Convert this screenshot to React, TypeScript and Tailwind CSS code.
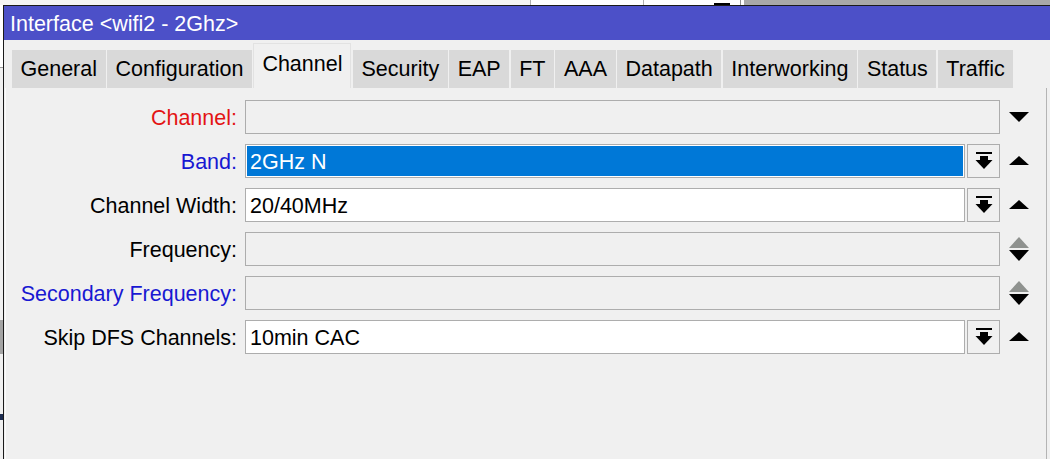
import React from "react";

const font = { fontFamily: '"Liberation Sans", Arial, sans-serif' };

const tabs = [
  "General",
  "Configuration",
  "Channel",
  "Security",
  "EAP",
  "FT",
  "AAA",
  "Datapath",
  "Interworking",
  "Status",
  "Traffic",
];

type Arrow = "down" | "up" | "both";

type Row = {
  label: string;
  color: string;
  value?: string;
  kind: "disabled" | "combo" | "selected";
  arrow: Arrow;
};

const rows: Row[] = [
  { label: "Channel:", color: "text-[#e31414]", kind: "disabled", arrow: "down" },
  { label: "Band:", color: "text-[#1818d2]", value: "2GHz N", kind: "selected", arrow: "up" },
  { label: "Channel Width:", color: "text-black", value: "20/40MHz", kind: "combo", arrow: "up" },
  { label: "Frequency:", color: "text-black", kind: "disabled", arrow: "both" },
  { label: "Secondary Frequency:", color: "text-[#1818d2]", kind: "disabled", arrow: "both" },
  { label: "Skip DFS Channels:", color: "text-black", value: "10min CAC", kind: "combo", arrow: "up" },
];

function DropIcon() {
  return (
    <svg width="18" height="18" viewBox="0 0 18 18">
      <rect x="1" y="0" width="16" height="2" fill="#000" />
      <rect x="5" y="4" width="8" height="4.5" fill="#000" />
      <polygon points="0.5,8 17.5,8 9,17" fill="#000" />
    </svg>
  );
}

function ArrowIcon({ kind }: { kind: Arrow }) {
  if (kind === "down") {
    return (
      <svg width="20" height="10" viewBox="0 0 20 10">
        <polygon points="0,0 20,0 10,10" fill="#000" />
      </svg>
    );
  }
  if (kind === "up") {
    return (
      <svg width="20" height="10" viewBox="0 0 20 10">
        <polygon points="10,0 20,9 0,9" fill="#000" />
      </svg>
    );
  }
  return (
    <svg width="20" height="24" viewBox="0 0 20 24">
      <polygon points="10,0 20,11 0,11" fill="#8f928f" />
      <polygon points="0,13 20,13 10,24" fill="#000" />
    </svg>
  );
}

function Field({ row }: { row: Row }) {
  if (row.kind === "disabled") {
    return <div className="h-[34px] w-[755px] border border-[#adadad] bg-[#f0f0f0]" />;
  }
  return (
    <div className="flex w-[755px] gap-[2px]">
      <div className="flex h-[34px] flex-1 border border-[#adadad] bg-white p-[1px]">
        <div
          className={
            row.kind === "selected"
              ? "flex flex-1 items-center bg-[#0078d7] pl-[3px] pt-[3px] text-white"
              : "flex flex-1 items-center pl-[3px] pt-[3px] text-black"
          }
        >
          {row.value}
        </div>
      </div>
      <div className="flex h-[34px] w-[33px] items-center justify-center border border-[#adadad] bg-[#f0f0f0]">
        <DropIcon />
      </div>
    </div>
  );
}

export default function App() {
  return (
    <div
      className="flex h-[459px] w-[1050px] flex-col overflow-hidden bg-white text-[21.5px] leading-none"
      style={font}
    >
      {/* strip of the window behind */}
      <div className="flex h-[5px] shrink-0">
        <div className="w-[530px] bg-[#f4f4f4]" />
        <div className="w-px bg-[#b0b0b0]" />
        <div className="w-[112px] bg-white" />
        <div className="w-px bg-[#b0b0b0]" />
        <div className="w-[70px] bg-white" />
        <div className="w-[16px] bg-white pt-[3px]">
          <div className="h-[2px] bg-black" />
        </div>
        <div className="w-[10px] bg-white" />
        <div className="w-px bg-[#909090]" />
        <div className="w-[3px] bg-white" />
        <div className="flex-1 bg-[#a8a8a8]" />
      </div>

      <div className="flex flex-1">
        <div className="flex w-[3px] flex-col bg-[#f0f0f0]">
          <div className="h-[62px] bg-white" />
          <div className="h-px bg-[#9a9a9a]" />
          <div className="h-[252px]" />
          <div className="h-[34px] bg-[#a4a4a4]" />
          <div className="h-[60px]" />
          <div className="h-[6px] bg-[#1c2c50]" />
        </div>

        <div className="flex flex-1 flex-col border-l border-t border-[#1a1a1a] bg-[#f0f0f0]">
          <div className="flex h-[34px] shrink-0 items-center bg-[#4c50c8] pl-[6px] pt-[3px] text-white">
            Interface &lt;wifi2 - 2Ghz&gt;
          </div>

          <div className="flex h-[48px] shrink-0 items-end gap-[1.5px] pl-[8px]">
            {tabs.map((t) =>
              t === "Channel" ? (
                <div
                  key={t}
                  className="flex h-[45px] items-center border-x border-t border-[#e2e2e2] bg-[#f0f0f0] px-[8px] pb-[3px]"
                >
                  {t}
                </div>
              ) : (
                <div key={t} className="flex h-[38px] items-center bg-[#d9d9d9] px-[8.5px] pt-[2px]">
                  {t}
                </div>
              )
            )}
          </div>

          <div className="ml-px mr-[3px] flex flex-1 flex-col gap-[10px] border-l border-r border-l-[#fbfbfb] border-r-[#b4b4b4] bg-[#f0f0f0] pt-[12px]">
            {rows.map((r) => (
              <div key={r.label} className="flex items-center">
                <div className={`w-[231px] pt-[3px] text-right ${r.color}`}>{r.label}</div>
                <div className="ml-[8px]">
                  <Field row={r} />
                </div>
                <div className="ml-[9px] flex w-[20px] justify-center">
                  <ArrowIcon kind={r.arrow} />
                </div>
              </div>
            ))}
          </div>
        </div>
      </div>
    </div>
  );
}
